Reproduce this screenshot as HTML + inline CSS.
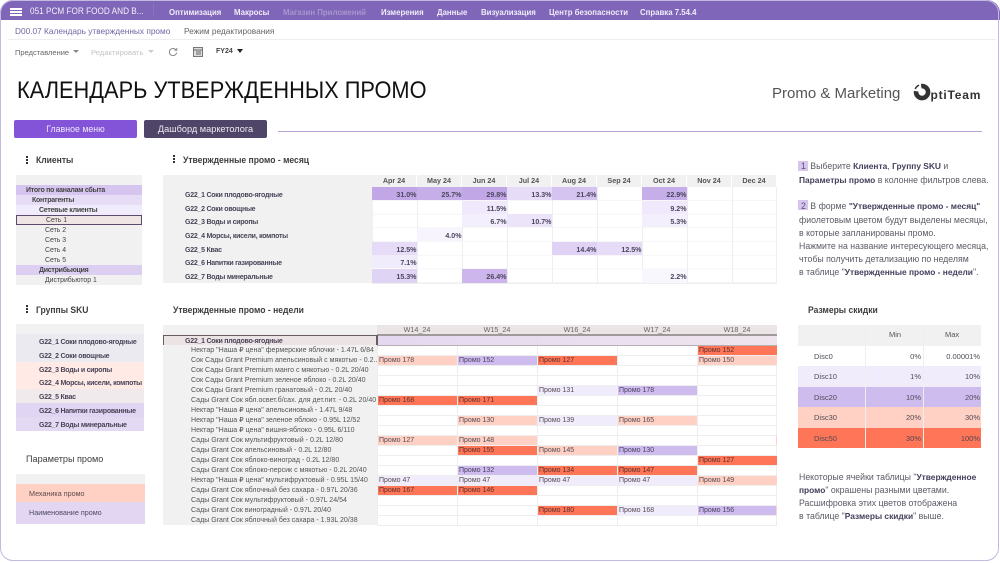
<!DOCTYPE html>
<html lang="ru"><head><meta charset="utf-8"><title>Календарь утвержденных промо</title>
<style>
html,body{margin:0;padding:0;background:#fff}
#p{position:relative;width:1000px;height:563px;overflow:hidden;background:#fff;font-family:"Liberation Sans","DejaVu Sans",sans-serif;color:#444;filter:blur(.25px)}
#p div,#p span.a{position:absolute;white-space:nowrap}
.fr{left:0;top:0;width:997px;height:559px;border:1.5px solid #c4b9e0;border-radius:13px;z-index:9;pointer-events:none}
.n{top:5px;height:14px;line-height:14px;font-size:8.7px;font-weight:bold;color:#f1ecfa;transform:scaleX(.9);transform-origin:0 0}
.t{font-size:9.3px;font-weight:bold;color:#3d3d3d;line-height:12px;transform:scaleX(.92);transform-origin:0 0}
.dots{width:2px;height:2px;background:#333;box-shadow:0 3px #333,0 6px #333}
.b{background:#f1f1f1}
.f{left:16px;width:126px;height:10px;font-size:6.9px;line-height:12px;color:#444}
.f.bb{font-weight:bold;font-size:7px;letter-spacing:-.25px}
.s{left:16px;width:128px;height:14px;line-height:18px;font-size:7px;letter-spacing:-.25px;font-weight:bold;color:#4a4458;padding-left:23px;box-sizing:border-box}
.mh{top:175px;width:44px;height:12px;line-height:12px;text-align:center;font-size:7.2px;font-weight:bold;color:#555;background:#f1f1f1}
.ml{left:163px;width:209px;height:14px;line-height:17px;background:#f1f1f1;font-size:7px;letter-spacing:-.25px;font-weight:bold;color:#4a4458;padding-left:22px;box-sizing:border-box}
.m{width:44.5px;height:13px;line-height:16px;text-align:right;font-size:7.1px;font-weight:bold;color:#4d4660;box-sizing:border-box}
.h{position:absolute}
.l{left:163px;width:214px;height:10px;line-height:12px;background:#f1f1f1;font-size:7.05px;color:#555;padding-left:28px;box-sizing:border-box;overflow:hidden}
.c{height:9.5px;line-height:9.5px;width:79px;font-size:7px;color:#554a50;padding-left:1.5px;box-sizing:border-box}
.r{background:#ff7558;color:#5a3028}.k{background:#ffd0c4}.v{background:#cfbcee;color:#4a4060}.w{background:#f1ecfc}
.rt{left:799px;font-size:8.75px;line-height:13px;color:#5b5b66}
.rt b{color:#443e5a;font-size:8.4px}
.dh{height:20px;line-height:20px;font-size:7.5px;color:#555}
.dr{left:798px;width:183px;height:20px}
.dc{position:absolute;top:0;height:20px;line-height:21px;font-size:7.5px;color:#4f4a55;text-align:right;box-sizing:border-box;padding-right:1px}
.wk{top:325px;width:80px;height:10px;line-height:9px;text-align:center;font-size:7.2px;color:#666}
</style></head><body><div id="p">
<div style="left:0;top:0;width:1000px;height:20px;background:#7f66b8;border-radius:13px 13px 0 0"></div>
<div style="left:10px;top:8px;width:12px;height:1.5px;background:#fff;box-shadow:0 3px #fff,0 6px #fff"></div>
<div style="left:30px;top:5px;line-height:14px;font-size:9.6px;color:#f3effa;transform:scaleX(.856);transform-origin:0 0">051 PCM FOR FOOD AND B...</div>
<div style="left:153px;top:3px;width:1px;height:14px;background:#8a74bf"></div>
<div class="n" style="left:169px">Оптимизация</div>
<div class="n" style="left:234px">Макросы</div>
<div class="n" style="left:283px;color:#a896cf">Магазин Приложений</div>
<div class="n" style="left:381px">Измерения</div>
<div class="n" style="left:437px">Данные</div>
<div class="n" style="left:481px">Визуализация</div>
<div class="n" style="left:549px">Центр безопасности</div>
<div class="n" style="left:640px">Справка 7.54.4</div>

<div style="left:15px;top:25px;line-height:12px;font-size:8.3px;color:#7565a5">D00.07 Календарь утвержденных промо</div>
<div style="left:184px;top:25px;line-height:12px;font-size:8.3px;color:#666">Режим редактирования</div>
<div style="left:8px;top:39px;width:988px;height:1px;background:#eee"></div>

<div style="left:15px;top:47px;line-height:12px;font-size:7.5px;color:#666">Представление</div>
<div style="left:73px;top:50px;border:3px solid transparent;border-top:3.5px solid #888"></div>
<div style="left:91px;top:47px;line-height:12px;font-size:7.6px;color:#c4c4c4">Редактировать</div>
<div style="left:148px;top:50px;border:3px solid transparent;border-top:3.5px solid #ccc"></div>
<svg class="h" style="left:168px;top:47px" width="10" height="10" viewBox="0 0 10 10"><path d="M8 3A3.6 3.6 0 1 0 8.6 5.6" fill="none" stroke="#888" stroke-width="1"/><path d="M6.5 3.2H8.8V1" fill="none" stroke="#888" stroke-width="1"/></svg>
<svg class="h" style="left:193px;top:47px" width="10" height="10" viewBox="0 0 10 10"><rect x=".5" y=".5" width="9" height="9" fill="#ddd" stroke="#777"/><path d="M1 3H9M3 5H8M3 7H8" stroke="#666"/></svg>
<div style="left:216px;top:45.5px;line-height:12px;font-size:7px;font-weight:bold;color:#444">FY24</div>
<div style="left:237px;top:49px;border:3.5px solid transparent;border-top:4px solid #222"></div>

<div style="left:17px;top:76px;line-height:30px;font-size:24px;color:#111;transform:scaleX(.908);transform-origin:0 0">КАЛЕНДАРЬ УТВЕРЖДЕННЫХ ПРОМО</div>
<div style="left:772px;top:85px;line-height:18px;font-size:15px;color:#555">Promo &amp; Marketing</div>
<svg class="h" style="left:913px;top:83px" width="18" height="18" viewBox="0 0 18 18"><path d="M8.2 3.1A6 6 0 1 1 3.1 8.2" fill="none" stroke="#333" stroke-width="4.6"/><path d="M2.2 6A7.2 7.2 0 0 1 6 2.2" fill="none" stroke="#333" stroke-width="1.4"/></svg>
<div style="left:930.5px;top:86.5px;line-height:16px;font-size:12px;font-weight:bold;color:#333;letter-spacing:.8px">ptiTeam</div>

<div style="left:14px;top:120px;width:123px;height:18px;line-height:18px;text-align:center;background:#8454d8;border-radius:2px;color:#efe8fb;font-size:8.8px">Главное меню</div>
<div style="left:144px;top:120px;width:123px;height:18px;line-height:18px;text-align:center;background:#4f4568;border-radius:2px;color:#eeeaf3;font-size:9.2px">Дашборд маркетолога</div>
<div style="left:278px;top:130.5px;width:704px;height:1px;background:#b9a3d6"></div>

<div class="dots" style="left:26px;top:156px"></div>
<div class="t" style="left:36px;top:154px">Клиенты</div>
<div class="b" style="left:16px;top:175px;width:126px;height:10px"></div>
<div class="f bb" style="top:185px;background:#d5c5ef;padding-left:10px;width:116px">Итого по каналам сбыта</div>
<div class="f bb" style="top:195px;background:#e6dcf5;padding-left:16px;width:110px">Контрагенты</div>
<div class="f bb" style="top:205px;background:#f1ecfb;padding-left:23px;width:103px">Сетевые клиенты</div>
<div class="f" style="top:215px;background:#efe5e5;padding-left:29px;width:95px;height:8px;line-height:10px;border:1px solid #5a4a70">Сеть 1</div>
<div class="f b" style="top:225px;padding-left:29px;width:97px">Сеть 2</div>
<div class="f b" style="top:235px;padding-left:29px;width:97px">Сеть 3</div>
<div class="f b" style="top:245px;padding-left:29px;width:97px">Сеть 4</div>
<div class="f b" style="top:255px;padding-left:29px;width:97px">Сеть 5</div>
<div class="f bb" style="top:265px;background:#dccff2;padding-left:23px;width:103px">Дистрибьюция</div>
<div class="f b" style="top:275px;padding-left:29px;width:97px">Дистрибьютор 1</div>

<div class="dots" style="left:26px;top:305px"></div>
<div class="t" style="left:36px;top:304px">Группы SKU</div>
<div class="b" style="left:16px;top:324px;width:128px;height:10px"></div>
<div class="s" style="top:334px;background:#ebeaf0">G22_1 Соки плодово-ягодные</div>
<div class="s" style="top:348px;background:#ebeaf0">G22_2 Соки овощные</div>
<div class="s" style="top:362px;background:#ffeae6">G22_3 Воды и сиропы</div>
<div class="s" style="top:375px;background:#ffeae6">G22_4 Морсы, кисели, компоты</div>
<div class="s" style="top:389px;background:#f0eaec">G22_5 Квас</div>
<div class="s" style="top:403px;background:#e0d5f2">G22_6 Напитки газированные</div>
<div class="s" style="top:417px;height:14px;background:#e4d9f3">G22_7 Воды минеральные</div>

<div class="t" style="left:26px;top:453px;font-weight:normal;font-size:9.1px;transform:none">Параметры промо</div>
<div class="b" style="left:16px;top:474px;width:129px;height:10px"></div>
<div style="left:16px;top:484px;width:129px;height:18px;line-height:20px;background:#ffd0c4;font-size:7.2px;color:#5c4a4a"><span style="margin-left:13px">Механика промо</span></div>
<div style="left:16px;top:502px;width:129px;height:22px;line-height:22px;background:#e2d6f2;font-size:7.2px;color:#4f4860"><span style="margin-left:13px">Наименование промо</span></div>

<div class="dots" style="left:173px;top:155px"></div>
<div class="t" style="left:183px;top:154px">Утвержденные промо - месяц</div>
<div class="b" style="left:163px;top:175px;width:209px;height:12px"></div>
<div class="mh" style="left:372px">Apr 24</div><div class="mh" style="left:417px">May 24</div><div class="mh" style="left:462px">Jun 24</div><div class="mh" style="left:507px">Jul 24</div><div class="mh" style="left:552px">Aug 24</div><div class="mh" style="left:597px">Sep 24</div><div class="mh" style="left:642px">Oct 24</div><div class="mh" style="left:687px">Nov 24</div><div class="mh" style="left:732px">Dec 24</div>
<div class="ml" style="top:187px">G22_1 Соки плодово-ягодные</div>
<div class="ml" style="top:201px">G22_2 Соки овощные</div>
<div class="ml" style="top:214px">G22_3 Воды и сиропы</div>
<div class="ml" style="top:228px">G22_4 Морсы, кисели, компоты</div>
<div class="ml" style="top:242px">G22_5 Квас</div>
<div class="ml" style="top:255px">G22_6 Напитки газированные</div>
<div class="ml" style="top:269px">G22_7 Воды минеральные</div>
<div style="left:372px;top:187px;width:405px;height:96px;background-image:linear-gradient(to right,#eee 1px,transparent 1px),linear-gradient(to bottom,transparent 13px,#eee 13px);background-size:45px 100%,100% 13.7px"></div>
<div style="left:776px;top:187px;width:1px;height:96px;background:#eee"></div>
<div style="left:372px;top:283px;width:405px;height:1px;background:#eee"></div>

<div class="m" style="left:372px;top:187px;background:#c1a7e6">31.0%</div>
<div class="m" style="left:417px;top:187px;background:#c6aee8">25.7%</div>
<div class="m" style="left:462px;top:187px;background:#c1a7e6">29.8%</div>
<div class="m" style="left:507px;top:187px;background:#e6dcf7">13.3%</div>
<div class="m" style="left:552px;top:187px;background:#d5c4f0">21.4%</div>
<div class="m" style="left:642px;top:187px;background:#c6aee8">22.9%</div>
<div class="m" style="left:462px;top:201px;background:#efe9fb">11.5%</div>
<div class="m" style="left:642px;top:201px;background:#efe9fb">9.2%</div>
<div class="m" style="left:462px;top:214px;background:#f3effc">6.7%</div>
<div class="m" style="left:507px;top:214px;background:#ece5fa">10.7%</div>
<div class="m" style="left:642px;top:214px;background:#f3effc">5.3%</div>
<div class="m" style="left:417px;top:228px;background:#f7f4fd">4.0%</div>
<div class="m" style="left:372px;top:242px;background:#e6dcf7">12.5%</div>
<div class="m" style="left:552px;top:242px;background:#dfd2f4">14.4%</div>
<div class="m" style="left:597px;top:242px;background:#e6dcf7">12.5%</div>
<div class="m" style="left:372px;top:255px;background:#f1ecfb">7.1%</div>
<div class="m" style="left:372px;top:269px;background:#e0d4f5;height:14px;line-height:17px">15.3%</div>
<div class="m" style="left:462px;top:269px;background:#ccb6eb;height:14px;line-height:17px">26.4%</div>
<div class="m" style="left:642px;top:269px;background:#f9f7fe;height:14px;line-height:17px">2.2%</div>

<div class="t" style="left:173px;top:304px">Утвержденные промо - недели</div>
<div class="b" style="left:163px;top:325px;width:214px;height:10px"></div>
<div style="left:377px;top:325px;width:400px;height:10px;background:#ebe5e5"></div>
<div class="wk" style="left:377px">W14_24</div>
<div class="wk" style="left:457px">W15_24</div>
<div class="wk" style="left:537px">W16_24</div>
<div class="wk" style="left:617px">W17_24</div>
<div class="wk" style="left:697px">W18_24</div>
<div style="left:377px;top:335px;width:400px;height:10px;background:linear-gradient(to right,#e4d8f0,#efe5ee)"></div>
<div style="left:377px;top:334px;width:400px;height:1.5px;background:#a09a9c"></div>
<div style="left:377px;top:344.5px;width:400px;height:1px;background:#b5b0b2"></div>
<div style="left:163px;top:335px;width:212px;height:9px;line-height:11px;background:#ece4e4;border:1px solid #665c62;font-size:7px;letter-spacing:-.25px;font-weight:bold;color:#4a4458"><span style="margin-left:21px">G22_1 Соки плодово-ягодные</span></div>
<div style="left:377px;top:335px;width:1px;height:10px;background:#665c62"></div>

<div class="l" style="top:345px">Нектар "Наша ₽ цена" фермерские яблочки - 1.47L 6/84</div>
<div class="l" style="top:355px">Сок Сады Grant Premium апельсиновый с мякотью - 0.2...</div>
<div class="l" style="top:365px">Сок Сады Grant Premium манго с мякотью - 0.2L 20/40</div>
<div class="l" style="top:375px">Сок Сады Grant Premium зеленое яблоко - 0.2L 20/40</div>
<div class="l" style="top:385px">Сок Сады Grant Premium гранатовый - 0.2L 20/40</div>
<div class="l" style="top:395px">Сады Grant Сок ябл.освет.б/сах. для дет.пит. - 0.2L 20/40</div>
<div class="l" style="top:405px">Нектар "Наша ₽ цена" апельсиновый - 1.47L 9/48</div>
<div class="l" style="top:415px">Нектар "Наша ₽ цена" зеленое яблоко - 0.95L 12/52</div>
<div class="l" style="top:425px">Нектар "Наша ₽ цена" вишня-яблоко - 0.95L 6/110</div>
<div class="l" style="top:435px">Сады Grant Сок мультифруктовый - 0.2L 12/80</div>
<div class="l" style="top:445px">Сады Grant Сок апельсиновый - 0.2L 12/80</div>
<div class="l" style="top:455px">Сады Grant Сок яблоко-виноград - 0.2L 12/80</div>
<div class="l" style="top:465px">Сады Grant Сок яблоко-персик с мякотью - 0.2L 20/40</div>
<div class="l" style="top:475px">Нектар "Наша ₽ цена" мультифруктовый - 0.95L 15/40</div>
<div class="l" style="top:485px">Сады Grant Сок яблочный без сахара - 0.97L 20/36</div>
<div class="l" style="top:495px">Сады Grant Сок мультифруктовый - 0.97L 24/54</div>
<div class="l" style="top:505px">Сады Grant Сок виноградный - 0.97L 20/40</div>
<div class="l" style="top:515px">Сады Grant Сок яблочный без сахара - 1.93L 20/38</div>
<div style="left:377px;top:346px;width:400px;height:180px;background-image:linear-gradient(to right,#eee 1px,transparent 1px),linear-gradient(to bottom,transparent 9px,#eee 9px);background-size:80px 100%,100% 10px"></div>
<div style="left:776px;top:346px;width:1px;height:180px;background:#eee"></div>

<div class="c r" style="left:697.5px;top:345.5px">Промо 152</div>
<div class="c k" style="left:377.5px;top:355.5px">Промо 178</div><div class="c v" style="left:457.5px;top:355.5px">Промо 152</div><div class="c r" style="left:537.5px;top:355.5px">Промо 127</div><div class="c k" style="left:697.5px;top:355.5px">Промо 150</div>
<div class="c w" style="left:537.5px;top:385.5px">Промо 131</div><div class="c v" style="left:617.5px;top:385.5px">Промо 178</div>
<div class="c r" style="left:377.5px;top:395.5px">Промо 168</div><div class="c r" style="left:457.5px;top:395.5px">Промо 171</div>
<div class="c k" style="left:457.5px;top:415.5px">Промо 130</div><div class="c w" style="left:537.5px;top:415.5px">Промо 139</div><div class="c k" style="left:617.5px;top:415.5px">Промо 165</div>
<div class="c k" style="left:377.5px;top:435.5px">Промо 127</div><div class="c k" style="left:457.5px;top:435.5px">Промо 148</div>
<div class="c r" style="left:457.5px;top:445.5px">Промо 155</div><div class="c k" style="left:537.5px;top:445.5px">Промо 145</div><div class="c v" style="left:617.5px;top:445.5px">Промо 130</div>
<div class="c r" style="left:697.5px;top:455.5px">Промо 127</div>
<div class="c v" style="left:457.5px;top:465.5px">Промо 132</div><div class="c r" style="left:537.5px;top:465.5px">Промо 134</div><div class="c r" style="left:617.5px;top:465.5px">Промо 147</div>
<div class="c w" style="left:377.5px;top:475.5px">Промо 47</div><div class="c w" style="left:457.5px;top:475.5px">Промо 47</div><div class="c w" style="left:537.5px;top:475.5px">Промо 47</div><div class="c w" style="left:617.5px;top:475.5px">Промо 47</div><div class="c k" style="left:697.5px;top:475.5px">Промо 149</div>
<div class="c r" style="left:377.5px;top:485.5px">Промо 167</div><div class="c r" style="left:457.5px;top:485.5px">Промо 146</div>
<div class="c r" style="left:537.5px;top:505.5px">Промо 180</div><div class="c w" style="left:617.5px;top:505.5px">Промо 168</div><div class="c v" style="left:697.5px;top:505.5px">Промо 156</div>
<div class="k" style="left:776px;top:355.5px;width:1px;height:9.5px"></div>
<div class="k" style="left:776px;top:435.5px;width:1px;height:9.5px"></div>
<div class="k" style="left:776px;top:505.5px;width:1px;height:9.5px"></div>

<div style="left:798px;top:161px;width:10px;height:10px;background:#d5c5ef"></div>
<div style="left:798px;top:200px;width:10px;height:10px;background:#d5c5ef"></div>
<div class="rt" style="top:160px"><span style="margin-left:2px;margin-right:2px;color:#5b5070">1</span> Выберите <b>Клиента</b>, <b>Группу SKU</b> и</div>
<div class="rt" style="top:174px"><b>Параметры промо</b> в колонне фильтров слева.</div>
<div class="rt" style="top:199.5px"><span style="margin-left:2px;margin-right:2px;color:#5b5070">2</span> В форме <b>"Утвержденные промо - месяц"</b></div>
<div class="rt" style="top:214px">фиолетовым цветом будут выделены месяцы,</div>
<div class="rt" style="top:227px">в которые запланированы промо.</div>
<div class="rt" style="top:240px">Нажмите на название интересующего месяца,</div>
<div class="rt" style="top:253px">чтобы получить детализацию по неделям</div>
<div class="rt" style="top:266px">в таблице "<b>Утвержденные промо - недели</b>".</div>

<div class="t" style="left:808px;top:304px">Размеры скидки</div>
<div class="b" style="left:798px;top:325px;width:183px;height:21px"></div>
<div class="dh" style="left:889px;top:325px">Min</div><div class="dh" style="left:945px;top:325px">Max</div>
<div class="dr" style="top:346px;background:#fff"><div class="dc" style="left:16px;text-align:left">Disc0</div><div class="dc" style="left:67px;width:57px">0%</div><div class="dc" style="left:125px;width:58px">0.00001%</div></div>
<div class="dr" style="top:366px;height:21px;background:#f1ecfc"><div class="dc" style="left:16px;text-align:left">Disc10</div><div class="dc" style="left:67px;width:57px">1%</div><div class="dc" style="left:125px;width:58px">10%</div></div>
<div class="dr" style="top:387px;background:#cfbcee"><div class="dc" style="left:16px;text-align:left">Disc20</div><div class="dc" style="left:67px;width:57px">10%</div><div class="dc" style="left:125px;width:58px">20%</div></div>
<div class="dr" style="top:407px;height:21px;background:#ffd0c4"><div class="dc" style="left:16px;text-align:left">Disc30</div><div class="dc" style="left:67px;width:57px">20%</div><div class="dc" style="left:125px;width:58px">30%</div></div>
<div class="dr" style="top:428px;background:#ff7558"><div class="dc" style="left:16px;text-align:left">Disc50</div><div class="dc" style="left:67px;width:57px">30%</div><div class="dc" style="left:125px;width:58px">100%</div></div>
<div style="left:865px;top:325px;width:1px;height:123px;background:#eee"></div>
<div style="left:923px;top:325px;width:1px;height:123px;background:#eee"></div>

<div class="rt" style="top:471px">Некоторые ячейки таблицы "<b>Утвержденное</b></div>
<div class="rt" style="top:484px"><b>промо</b>" окрашены разными цветами.</div>
<div class="rt" style="top:497px">Расшифровка этих цветов отображена</div>
<div class="rt" style="top:510px">в таблице "<b>Размеры скидки</b>" выше.</div>
<div class="fr"></div>
</div></body></html>
